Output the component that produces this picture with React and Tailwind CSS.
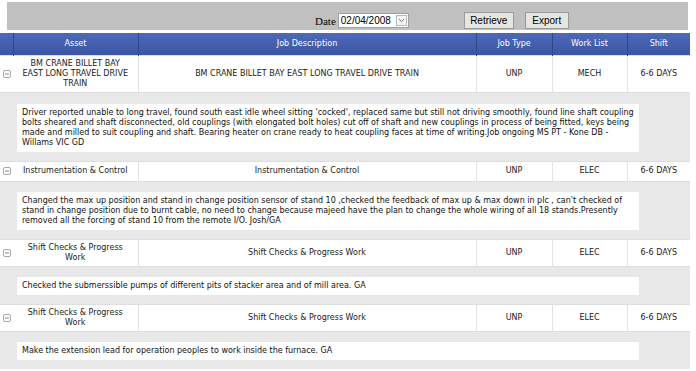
import React from "react";

const jobs = [
  {
    asset: "BM CRANE BILLET BAY EAST LONG TRAVEL DRIVE TRAIN",
    desc: "BM CRANE BILLET BAY EAST LONG TRAVEL DRIVE TRAIN",
    type: "UNP",
    list: "MECH",
    shift: "6-6 DAYS",
    notes:
      "Driver reported unable to long travel, found south east idle wheel sitting 'cocked', replaced same but still not driving smoothly, found line shaft coupling bolts sheared and shaft disconnected, old couplings (with elongated bolt holes) cut off of shaft and new couplings in process of being fitted, keys being made and milled to suit coupling and shaft. Bearing heater on crane ready to heat coupling faces at time of writing.Job ongoing MS PT - Kone DB - Willams VIC GD",
  },
  {
    asset: "Instrumentation & Control",
    desc: "Instrumentation & Control",
    type: "UNP",
    list: "ELEC",
    shift: "6-6 DAYS",
    notes:
      "Changed the max up position and stand in change position sensor of stand 10 ,checked the feedback of max up & max down in plc , can't checked of stand in change position due to burnt cable, no need to change because majeed have the plan to change the whole wiring of all 18 stands.Presently removed all the forcing of stand 10 from the remote I/O. Josh/GA",
  },
  {
    asset: "Shift Checks & Progress Work",
    desc: "Shift Checks & Progress Work",
    type: "UNP",
    list: "ELEC",
    shift: "6-6 DAYS",
    notes: "Checked the submerssible pumps of different pits of stacker area and of mill area. GA",
  },
  {
    asset: "Shift Checks & Progress Work",
    desc: "Shift Checks & Progress Work",
    type: "UNP",
    list: "ELEC",
    shift: "6-6 DAYS",
    notes: "Make the extension lead for operation peoples to work inside the furnace. GA",
  },
];

function Collapse() {
  return (
    <svg width="8" height="8" viewBox="0 0 8 8" className="block">
      <rect x="0.5" y="0.5" width="7" height="7" rx="1.5" fill="#fff" stroke="#a8a8a8" />
      <line x1="2" y1="4" x2="6" y2="4" stroke="#888" />
    </svg>
  );
}

export default function App() {
  return (
    <div className="w-[696px] h-[371px] overflow-hidden bg-white text-[#222] font-['DejaVu_Sans',sans-serif] text-[8px] leading-[10px]">
      <div className="ml-[7px] mt-[2px] w-[681px] h-[28px] bg-[#c0c0c0] flex items-end pb-[1px]">
        <div className="ml-[308px] flex items-center h-[17px]">
          <span className="font-['Liberation_Serif',serif] text-[11px] text-black mr-[2px]">Date</span>
          <div className="w-[71px] h-[15px] bg-white border border-[#a0a0a0] flex items-center pl-[2px] font-['Liberation_Sans',sans-serif] text-[10px] text-black">
            <span className="flex-1">02/04/2008</span>
            <span className="w-[11px] h-[11px] mr-[1px] border border-[#b8b8b8] bg-[#f4f4f4] flex items-center justify-center">
              <svg width="7" height="5" viewBox="0 0 7 5">
                <path d="M1 1 L3.5 3.5 L6 1" fill="none" stroke="#777" strokeWidth="1" />
              </svg>
            </span>
          </div>
          <button className="ml-[55px] w-[50px] h-[17px] bg-[#e6e6e0] border border-[#9a9a9a] font-['Liberation_Sans',sans-serif] text-[10px] text-black leading-none">
            Retrieve
          </button>
          <button className="ml-[11px] w-[44px] h-[17px] bg-[#e6e6e0] border border-[#9a9a9a] font-['Liberation_Sans',sans-serif] text-[10px] text-black leading-none">
            Export
          </button>
        </div>
      </div>

      <table className="mt-[3px] w-[690px] table-fixed border-collapse">
        <colgroup>
          <col className="w-[13px]" />
          <col className="w-[125px]" />
          <col className="w-[338px]" />
          <col className="w-[76px]" />
          <col className="w-[75px]" />
          <col className="w-[63px]" />
        </colgroup>
        <thead>
          <tr className="h-[22px] bg-gradient-to-b from-[#4d6ab8] to-[#3a55a3] text-white">
            <th className="border-r border-[#2f4788] font-normal"></th>
            <th className="border-r border-[#2f4788] font-normal">Asset</th>
            <th className="border-r border-[#2f4788] font-normal">Job Description</th>
            <th className="border-r border-[#2f4788] font-normal">Job Type</th>
            <th className="border-r border-[#2f4788] font-normal">Work List</th>
            <th className="font-normal">Shift</th>
          </tr>
        </thead>
        <tbody>
          {jobs.map((j, i) => (
            <React.Fragment key={i}>
              <tr className="h-[20px] border-t border-b border-[#dedede] bg-white">
                <td className="align-middle pl-[3px]">
                  <Collapse />
                </td>
                <td className="text-center py-[3px] px-[9px] border-r border-[#e2e2e2]">{j.asset}</td>
                <td className="text-center border-r border-[#e2e2e2]">{j.desc}</td>
                <td className="text-center border-r border-[#e2e2e2]">{j.type}</td>
                <td className="text-center border-r border-[#e2e2e2]">{j.list}</td>
                <td className="text-center">{j.shift}</td>
              </tr>
              <tr className="bg-[#e8e8e8]">
                <td colSpan={6} className={`${i === 0 ? "pt-[11px]" : "pt-[10px]"} pb-[9px] pl-[17px]`}>
                  <div className="w-[622px] bg-white px-[5px] py-[4px] text-[#111]">{j.notes}</div>
                </td>
              </tr>
            </React.Fragment>
          ))}
        </tbody>
      </table>
    </div>
  );
}
